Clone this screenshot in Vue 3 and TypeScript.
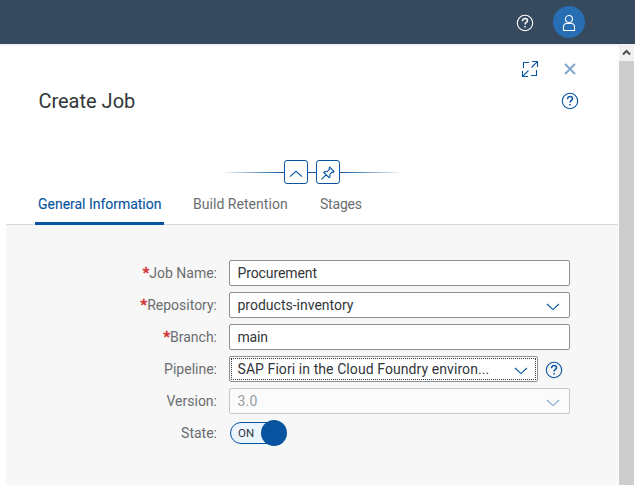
<script setup lang="ts">
import { ref } from 'vue'

interface Field {
  label: string
  value: string
  required?: boolean
  select?: boolean
  focused?: boolean
  disabled?: boolean
  cls: string
}

const tabs = [
  { name: 'General Information', cls: 'general' },
  { name: 'Build Retention', cls: 'retention' },
  { name: 'Stages', cls: 'stages' },
]
const active = ref('General Information')
const enabled = ref(true)
const fields: Field[] = [
  { label: 'Job Name:', value: 'Procurement', required: true, cls: 'name' },
  { label: 'Repository:', value: 'products-inventory', required: true, select: true, cls: 'repository' },
  { label: 'Branch:', value: 'main', required: true, cls: 'branch' },
  { label: 'Pipeline:', value: 'SAP Fiori in the Cloud Foundry environ...', select: true, focused: true, cls: 'pipeline' },
  { label: 'Version:', value: '3.0', select: true, disabled: true, cls: 'version' },
]
</script>

<template>
  <div class="app">
    <header class="shell">
      <svg class="help" viewBox="0 0 18 18"><circle cx="9" cy="9" r="7.7" /><path class="q" d="M6.5 7.2V6.9c0-1.4 1-2.3 2.5-2.3s2.5.8 2.5 2.1c0 1.8-2.5 1.7-2.5 3.9" /><path class="q" d="M9 12v1.6" /></svg>
      <div class="avatar">
        <svg viewBox="0 0 14 18"><circle cx="7" cy="5" r="3.5" /><path d="M1.5 16.5v-3.2c0-2.5 1.5-3.8 3.2-3.8h4.6c1.7 0 3.2 1.3 3.2 3.8v3.2z" /></svg>
      </div>
    </header>
    <div class="body">
      <main class="page">
        <section class="top">
          <div class="actions">
            <svg class="expand" viewBox="0 0 18 18"><path d="M8 2.5H2.5V8M10 15.5h5.5V10M10.5 7.5l5.6-5.6M11 1.5h5.5V7M7.5 10.5l-5.6 5.6M1.5 11v5.5H7" /></svg>
            <svg class="close" viewBox="0 0 12 12"><path d="M1 1l10 10M11 1L1 11" /></svg>
          </div>
          <div class="heading">
            <h1>Create Job</h1>
            <svg class="help" viewBox="0 0 18 18"><circle cx="9" cy="9" r="7.7" /><path class="q" d="M6.5 7.2V6.9c0-1.4 1-2.3 2.5-2.3s2.5.8 2.5 2.1c0 1.8-2.5 1.7-2.5 3.9" /><path class="q" d="M9 12v1.6" /></svg>
          </div>
          <div class="divider">
            <i class="line left"></i>
            <button><svg viewBox="0 0 22 22"><path d="M5 15.7l6-5.4 6 5.4" /></svg></button>
            <i class="line mid"></i>
            <button><svg viewBox="0 0 22 22"><path d="M12.7 6.2l4.3 4.3-.9.8-1-.2-2.3 2.3.2 2.4-.9.9-5.3-5.3.9-.9 2.4.2 2.3-2.3-.3-1.2zM9.1 13.8L4.5 18.4" /></svg></button>
            <i class="line right"></i>
          </div>
        </section>
        <nav class="tabs">
          <div v-for="t in tabs" :key="t.name" class="tab" :class="[t.cls, { active: active === t.name }]" @click="active = t.name"><span>{{ t.name }}</span></div>
        </nav>
        <section class="form">
          <div v-for="f in fields" :key="f.label" class="row" :class="f.cls">
            <div class="label"><b v-if="f.required">*</b><span>{{ f.label }}</span></div>
            <div class="control" :class="{ focused: f.focused, disabled: f.disabled }">
              <span class="value">{{ f.value }}</span>
              <svg v-if="f.select" class="chev" viewBox="0 0 14 8"><path d="M1 1l6 5.6L13 1" /></svg>
            </div>
            <svg v-if="f.focused" class="help" viewBox="0 0 18 18"><circle cx="9" cy="9" r="7.7" /><path class="q" d="M6.5 7.2V6.9c0-1.4 1-2.3 2.5-2.3s2.5.8 2.5 2.1c0 1.8-2.5 1.7-2.5 3.9" /><path class="q" d="M9 12v1.6" /></svg>
          </div>
          <div class="row state">
            <div class="label"><span>State:</span></div>
            <div class="switch" @click="enabled = !enabled">
              <div class="track">{{ enabled ? 'ON' : 'OFF' }}</div>
              <div class="knob"></div>
            </div>
          </div>
        </section>
      </main>
      <aside class="scrollbar">
        <div class="arrow"><svg viewBox="0 0 9 7"><path d="M1 5.5l3.5-3.5L8 5.5" /></svg></div>
        <div class="thumb"></div>
      </aside>
    </div>
  </div>
</template>

<style>
body { overflow: hidden; background: #fff; }
</style>

<style scoped>
* { box-sizing: border-box; }
.app { width: 635px; height: 485px; display: flex; flex-direction: column; font: 14px/16px Roboto, "Liberation Sans", sans-serif; color: #32363a; background: #fff; }
svg { display: block; flex: none; fill: none; stroke: #0854a0; stroke-width: 1.1; }
.help { width: 18px; height: 18px; }
.help .q { stroke-width: 1.5; }
.shell { height: 44px; flex: none; background: #354a5f; display: flex; justify-content: flex-end; align-items: center; gap: 19px; padding-right: 50px; }
.shell svg { stroke: #fff; }
.shell .help { margin-top: 2px; }
.avatar { width: 32px; height: 32px; border-radius: 50%; background: #286eb4; display: flex; align-items: center; justify-content: center; }
.avatar svg { width: 14px; height: 18px; margin-top: 1px; }
.body { flex: 1; display: flex; background: linear-gradient(#eee, #fff 3px); }
.page { width: 618px; padding-left: 6px; display: flex; flex-direction: column; }
.top { height: 142px; }
.actions { height: 47px; padding: 16px 42px 0 0; display: flex; justify-content: flex-end; gap: 25px; }
.expand { width: 18px; height: 18px; }
.close { width: 12px; height: 12px; margin-top: 3px; stroke-width: 2; opacity: .5; }
.heading { height: 20px; padding: 0 39px 0 32.4px; display: flex; align-items: center; justify-content: space-between; }
h1 { margin: 0; font-size: 20px; line-height: 20px; font-weight: 400; letter-spacing: 0; }
.divider { height: 24px; margin: 49px 0 0 214px; display: flex; align-items: center; }
.divider button { width: 24px; height: 24px; padding: 0; border: 1px solid #0854a0; border-radius: 3px; background: #fff; }
.divider button svg { width: 22px; height: 22px; }
.line { height: 1px; background: #0854a0; }
.left { width: 64px; background: linear-gradient(90deg, transparent, #0854a0); }
.mid { width: 8px; }
.right { width: 64px; background: linear-gradient(90deg, #0854a0, transparent); }
.tabs { height: 39px; border-bottom: 1px solid #d9d9d9; padding-left: 29px; display: flex; gap: 26px; color: #6a6d70; }
.tab { height: 39px; padding: 10px 3px 0; white-space: nowrap; border-bottom: 3px solid transparent; }
.tab.general { width: 129px; letter-spacing: -.02px; }
.tab.retention { width: 101px; letter-spacing: .04px; }
.tab.stages { letter-spacing: -.2px; }
.tab.active { color: #0854a0; border-color: #0854a0; border-radius: 2px 2px 0 0; -webkit-text-stroke: .12px; }
.form { flex: 1; background: #f7f7f7; padding-top: 35px; display: flex; flex-direction: column; gap: 6px; }
.row { height: 26px; display: flex; align-items: center; }
.label { width: 211px; margin-right: 12px; height: 16px; color: #6a6d70; display: flex; justify-content: flex-end; }
.label b { color: #d12f2f; font-size: 15px; line-height: 17px; font-weight: 700; -webkit-text-stroke: .3px; }
.control { width: 341px; height: 26px; border: 1px solid #89919a; border-radius: 2px; background: #fff; display: flex; align-items: center; justify-content: space-between; padding: 0 9px 0 7.5px; position: relative; white-space: nowrap; }
.name .value { letter-spacing: -.1px; }
.branch .value { letter-spacing: -.2px; }
.pipeline .value { letter-spacing: .08px; }
.version .value { letter-spacing: .2px; }
.chev { width: 14px; height: 8px; margin-top: 3px; }
.focused { width: 309px; }
.focused::after { content: ""; position: absolute; inset: 1px; border: 1px dotted #32363a; }
.focused + .help { margin-left: 7px; margin-top: 2px; }
.disabled { background: #fbfbfb; border-color: #c4c6c8; color: #999b9d; }
.disabled .chev { opacity: .5; }
.switch { width: 57px; height: 26px; margin-left: 1px; display: flex; align-items: center; }
.track { width: 50px; height: 22px; border: 1px solid #0854a0; border-radius: 11px; background: #ebf5fe; padding-left: 7px; font-size: 11.5px; line-height: 21px; letter-spacing: .2px; }
.knob { width: 26px; height: 26px; margin-left: -19px; border-radius: 50%; background: #0854a0; }
.scrollbar { width: 15px; margin-left: 1px; background: #f0f0f0; display: flex; flex-direction: column; }
.arrow { height: 17px; display: flex; align-items: center; justify-content: center; }
.arrow svg { width: 9px; height: 7px; stroke: #505050; stroke-width: 2; }
.thumb { flex: 1; background: #cdcdcd; }
</style>
